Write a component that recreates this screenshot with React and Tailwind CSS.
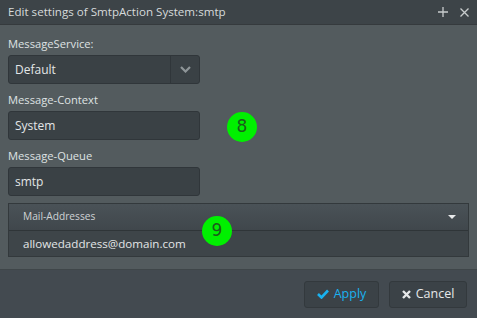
import React from "react";

function Field({ label, value, className = "" }) {
  return (
    <div className={`flex flex-col ${className}`}>
      <label className="h-[16px] text-[11.2px] leading-[16px] text-[#dfe2e3]">{label}</label>
      <div className="mt-[3px] h-[29px] w-[192px] rounded-[3px] border border-[#30363a] bg-[#3a4145] px-[6px] text-[12px] leading-[27px]">
        {value}
      </div>
    </div>
  );
}

function Badge({ n, className }) {
  return (
    <div
      className={`absolute flex h-[30px] w-[30px] items-center justify-center rounded-full bg-[#00f000] text-[17px] text-[#1c5a1c] ${className}`}
      style={{ fontFamily: '"DejaVu Sans", sans-serif' }}
    >
      {n}
    </div>
  );
}

export default function App() {
  return (
    <div
      className="relative flex h-[318px] w-[477px] flex-col bg-[#535b5e] text-[#e3e6e7]"
      style={{ fontFamily: '"Open Sans", "Noto Sans", sans-serif' }}
    >
      <header className="flex h-[25px] items-center justify-between border-b border-[#353a3d] bg-[#3d4448] pl-[8px] pr-[8px]">
        <span className="text-[11.6px] text-[#d6dadb]">Edit settings of SmtpAction System:smtp</span>
        <div className="flex items-center gap-[12px] text-[#c8cccd]">
          <svg width="10" height="10" viewBox="0 0 10 10" stroke="currentColor" strokeWidth="1.3">
            <path d="M5 0v10M0 5h10" />
          </svg>
          <svg width="9" height="9" viewBox="0 0 9 9" stroke="currentColor" strokeWidth="1.3">
            <path d="M0.5 0.5l8 8M8.5 0.5l-8 8" />
          </svg>
        </div>
      </header>

      <main className="flex flex-1 flex-col px-[8px] pt-[11px]">
        <div className="flex flex-col">
          <label className="h-[16px] text-[11.2px] leading-[16px] text-[#dfe2e3]">MessageService:</label>
          <div className="mt-[3px] flex h-[29px] w-[192px] rounded-[3px] border border-[#30363a] bg-[#3a4145]">
            <span className="flex-1 px-[6px] text-[12px] leading-[27px]">Default</span>
            <span className="flex w-[29px] items-center justify-center border-l border-[#30363a]">
              <svg width="11" height="7" viewBox="0 0 11 7" fill="none" stroke="#8e9598" strokeWidth="2.2">
                <path d="M1 1l4.5 4.5L10 1" />
              </svg>
            </span>
          </div>
        </div>
        <Field label="Message-Context" value="System" className="mt-[8px]" />
        <Field label="Message-Queue" value="smtp" className="mt-[8px]" />

        <div className="mt-[7px] w-[461px] border border-[#33393c] bg-[#3e4549]">
          <div className="flex h-[27px] items-center justify-between border-b border-[#2f3538] bg-gradient-to-b from-[#4a5257] to-[#40474c] pl-[14px] pr-[12px]">
            <span className="text-[10.2px] text-[#cfd3d5]">Mail-Addresses</span>
            <svg width="8" height="4" viewBox="0 0 8 4" fill="#e8eaeb">
              <path d="M0 0h8L4 4z" />
            </svg>
          </div>
          <div className="h-[25px] pl-[14px] text-[11.6px] leading-[25px] text-[#e3e6e7]">allowedaddress@domain.com</div>
        </div>
      </main>

      <footer className="flex h-[49px] items-center justify-end gap-[10px] border-t border-[#3f4649] bg-[#434a50] pr-[10px]">
        <button className="flex h-[27px] w-[75px] items-center justify-center gap-[5px] rounded-[3px] border border-[#33393d] bg-[#3b4247] text-[12.5px] text-[#19b2f0]">
          <svg width="12" height="10" viewBox="0 0 12 10" fill="none" stroke="#19b2f0" strokeWidth="2.6">
            <path d="M1 5l3.5 3.5L11 1.5" />
          </svg>
          Apply
        </button>
        <button className="flex h-[27px] w-[78px] items-center justify-center gap-[5px] rounded-[3px] border border-[#33393d] bg-[#3b4247] text-[12.5px] text-[#e6e8e9]">
          <svg width="9" height="9" viewBox="0 0 9 9" fill="none" stroke="#e6e8e9" strokeWidth="2.4">
            <path d="M1 1l7 7M8 1l-7 7" />
          </svg>
          Cancel
        </button>
      </footer>

      <Badge n="8" className="left-[227px] top-[112px]" />
      <Badge n="9" className="left-[202px] top-[216px]" />
    </div>
  );
}
